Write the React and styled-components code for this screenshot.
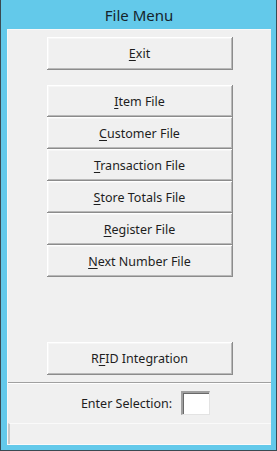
import React from "react";
import styled, { createGlobalStyle } from "styled-components";

const GlobalStyle = createGlobalStyle`
  html, body {
    margin: 0;
    padding: 0;
    background: #ffffff;
  }
  body {
    font-family: "Noto Sans", "Liberation Sans", sans-serif;
  }
`;

const menuItems = [
  { label: "Item File", key: "I" },
  { label: "Customer File", key: "C" },
  { label: "Transaction File", key: "T" },
  { label: "Store Totals File", key: "S" },
  { label: "Register File", key: "R" },
  { label: "Next Number File", key: "N" },
];

// underline the mnemonic letter, windows style
function Mnemonic({ text, at = 0 }) {
  return (
    <>
      {text.slice(0, at)}
      <u>{text[at]}</u>
      {text.slice(at + 1)}
    </>
  );
}

export default function App() {
  return (
    <>
      <GlobalStyle />
      <Window>
        <TitleBar>File Menu</TitleBar>
        <Client>
          <ExitRow>
            <MenuButton>
              <Mnemonic text="Exit" />
            </MenuButton>
          </ExitRow>

          <ButtonStack>
            {menuItems.map((item) => (
              <MenuButton key={item.label}>
                <Mnemonic text={item.label} />
              </MenuButton>
            ))}
          </ButtonStack>

          <Spacer />

          <ExitRow>
            <MenuButton>
              <Mnemonic text="RFID Integration" at={1} />
            </MenuButton>
          </ExitRow>

          <Separator />

          <SelectionRow>
            <Label>Enter Selection:</Label>
            <SelectionInput type="text" />
          </SelectionRow>

          <StatusBar />
        </Client>
      </Window>
    </>
  );
}

const Window = styled.div`
  box-sizing: border-box;
  width: 277px;
  height: 451px;
  background: #63c9ea;
  border-left: 1px solid #3a4a52;
  border-right: 1px solid #3a4a52;
  border-bottom: 1px solid #3a4a52;
  display: flex;
  flex-direction: column;
  padding: 0 5px 5px 6px;
`;

const TitleBar = styled.div`
  height: 29px;
  display: flex;
  align-items: center;
  justify-content: center;
  font-size: 15px;
  color: #15242c;
  padding-top: 1px;
  box-sizing: border-box;
`;

const Client = styled.div`
  flex: 1;
  display: flex;
  flex-direction: column;
  background: #f0f0f0;
  border-top: 1px solid #f8f8f8;
  border-left: 1px solid #f8f8f8;
  border-bottom: 1px solid #fafafa;
  box-sizing: border-box;
`;

const ExitRow = styled.div`
  display: flex;
  justify-content: center;
  padding-top: 7px;
  & > button {
    height: 33px;
  }
`;

const ButtonStack = styled.div`
  display: flex;
  flex-direction: column;
  align-items: center;
  margin-top: 15px;
`;

const MenuButton = styled.button`
  box-sizing: border-box;
  width: 186px;
  height: 32px;
  margin: 0;
  padding: 0;
  background: #f0f0f0;
  border: none;
  box-shadow: inset -1px -1px #8c8c8c, inset 1px 1px #ffffff,
    inset -2px -2px #b9b9b9, inset 2px 2px #f6f6f6;
  font-family: "Noto Sans", "Liberation Sans", sans-serif;
  font-size: 12.5px;
  color: #1e1e1e;
  cursor: pointer;
  u {
    text-decoration-thickness: 1px;
    text-underline-offset: 2px;
  }
`;

const Spacer = styled.div`
  height: 58px;
`;

const Separator = styled.div`
  margin-top: 7px;
  height: 1px;
  background: #a0a0a0;
  border-bottom: 1px solid #ffffff;
`;

const SelectionRow = styled.div`
  display: flex;
  align-items: center;
  justify-content: center;
  gap: 9px;
  padding-left: 12px;
  margin-top: 7px;
`;

const Label = styled.span`
  font-size: 12.5px;
  color: #1e1e1e;
`;

const SelectionInput = styled.input`
  box-sizing: border-box;
  width: 29px;
  height: 24px;
  margin: 0;
  padding: 0;
  background: #ffffff;
  border-top: 2px solid #a0a0a0;
  border-left: 2px solid #a0a0a0;
  border-right: 1px solid #e3e3e3;
  border-bottom: 1px solid #e3e3e3;
  box-shadow: inset 1px 1px #696969;
  outline: none;
`;

const StatusBar = styled.div`
  margin-top: 8px;
  height: 20px;
  border-top: 1px solid #fafafa;
  border-left: 2px solid #c8c8c8;
  background: #f0f0f0;
`;
